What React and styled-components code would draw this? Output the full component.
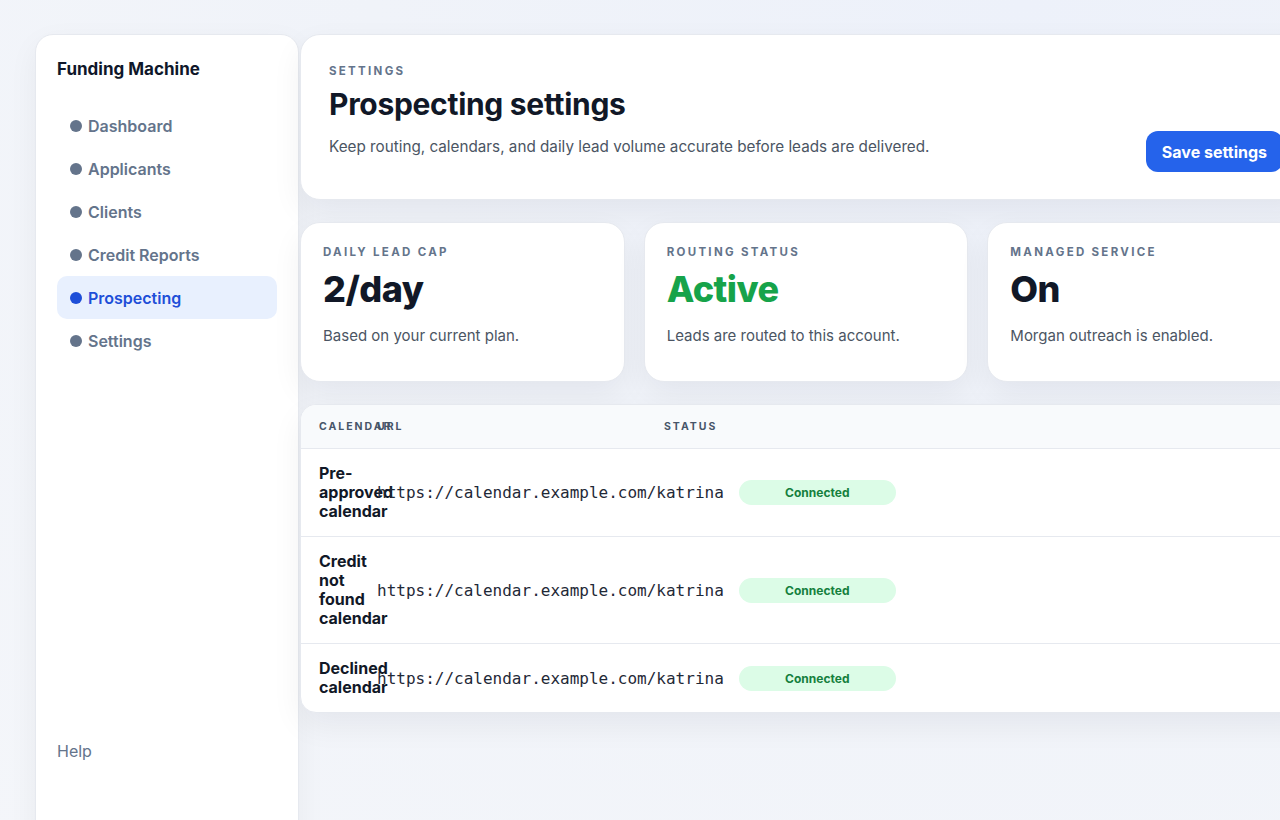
import styled, { createGlobalStyle } from 'styled-components';

const Global = createGlobalStyle`
  * { box-sizing: border-box; }
  html, body { margin: 0; padding: 0; }
  body {
    font-family: Inter, "Noto Sans", sans-serif;
    background: radial-gradient(ellipse at 80% 0%, #edf1fa 0%, #f0f3f9 45%, #f4f6fa 100%);
    min-height: 820px;
    overflow: hidden;
    color: #0f172a;
  }
`;

const nav = ['Dashboard', 'Applicants', 'Clients', 'Credit Reports', 'Prospecting', 'Settings'];

const stats = [
  { label: 'Daily lead cap', value: '2/day', note: 'Based on your current plan.' },
  { label: 'Routing status', value: 'Active', note: 'Leads are routed to this account.', green: true },
  { label: 'Managed service', value: 'On', note: 'Morgan outreach is enabled.' },
];

const calendars = [
  'Pre-approved calendar',
  'Credit not found calendar',
  'Declined calendar',
];

const App = () => {
  return (
    <Shell>
      <Global />
      <Sidebar>
        <Brand>Funding Machine</Brand>
        <NavList>
          {nav.map((item) => (
            <NavItem key={item} $active={item === 'Prospecting'}>
              <Dot />
              {item}
            </NavItem>
          ))}
        </NavList>
        <Help>Help</Help>
      </Sidebar>
      <Main>
        <HeaderCard>
          <div>
            <Eyebrow>Settings</Eyebrow>
            <Title>Prospecting settings</Title>
            <Subtitle>Keep routing, calendars, and daily lead volume accurate before leads are delivered.</Subtitle>
          </div>
          <SaveButton>Save settings</SaveButton>
        </HeaderCard>
        <StatGrid>
          {stats.map((s) => (
            <StatCard key={s.label}>
              <Eyebrow>{s.label}</Eyebrow>
              <StatValue $green={s.green}>{s.value}</StatValue>
              <StatNote>{s.note}</StatNote>
            </StatCard>
          ))}
        </StatGrid>
        <TableCard>
          <HeadRow>
            <HeadCell>Calendar</HeadCell>
            <HeadCell>URL</HeadCell>
            <HeadCell>Status</HeadCell>
          </HeadRow>
          {calendars.map((c) => (
            <Row key={c}>
              <NameCell>{c}</NameCell>
              <UrlCell>https://calendar.example.com/katrina</UrlCell>
              <Pill>Connected</Pill>
            </Row>
          ))}
        </TableCard>
      </Main>
    </Shell>
  );
};

export default App;

const Shell = styled.div`
  display: grid;
  grid-template-columns: 264px 1012px;
  column-gap: 1px;
  padding: 34px 0 0 35px;
  align-items: start;
`;

const Sidebar = styled.aside`
  height: 830px;
  background: #fff;
  border: 1px solid #e6e9ef;
  border-radius: 18px;
  padding: 22px 21px;
  display: flex;
  flex-direction: column;
  box-shadow: 0 10px 30px rgba(15, 23, 42, 0.05);
`;

const Brand = styled.div`
  font-size: 17px;
  font-weight: 700;
  color: #0f172a;
  line-height: 24px;
`;

const NavList = styled.nav`
  margin-top: 23px;
  display: flex;
  flex-direction: column;
`;

const NavItem = styled.div`
  height: 43px;
  display: flex;
  align-items: center;
  gap: 6px;
  padding: 0 13px;
  border-radius: 10px;
  font-size: 16px;
  font-weight: 600;
  color: ${(p) => (p.$active ? '#1d4ed8' : '#64748b')};
  background: ${(p) => (p.$active ? '#e8f0fe' : 'transparent')};
  span { background: ${(p) => (p.$active ? '#1d4ed8' : '#64748b')}; }
`;

const Dot = styled.span`
  width: 12px;
  height: 12px;
  border-radius: 50%;
  flex: none;
`;

const Help = styled.div`
  margin-top: 379px;
  font-size: 16px;
  color: #64748b;
  line-height: 20px;
`;

const Main = styled.main`
  display: flex;
  flex-direction: column;
  gap: 22px;
`;

const Card = styled.section`
  background: #fff;
  border: 1px solid #e6e9ef;
  border-radius: 20px;
  box-shadow: 0 12px 32px rgba(15, 23, 42, 0.06);
`;

const HeaderCard = styled(Card)`
  height: 166px;
  padding: 29px 28px 27px 28px;
  display: flex;
  justify-content: space-between;
  align-items: flex-start;
`;

const Eyebrow = styled.div`
  font-size: 11.5px;
  font-weight: 700;
  letter-spacing: 0.2em;
  text-transform: uppercase;
  color: #64748b;
  line-height: 14px;
`;

const Title = styled.h1`
  margin: 8px 0 0;
  font-size: 30px;
  font-weight: 700;
  color: #111827;
  line-height: 36px;
  letter-spacing: -0.01em;
`;

const Subtitle = styled.p`
  margin: 15px 0 0;
  font-size: 15.25px;
  color: #4b5563;
  line-height: 20px;
`;

const SaveButton = styled.button`
  align-self: flex-end;
  height: 41px;
  padding: 0 16px;
  border: 0;
  border-radius: 12px;
  background: #2563eb;
  color: #fff;
  font-family: inherit;
  font-size: 16px;
  font-weight: 700;
  white-space: nowrap;
`;

const StatGrid = styled.div`
  display: grid;
  grid-template-columns: repeat(3, 1fr);
  gap: 19px;
`;

const StatCard = styled(Card)`
  height: 160px;
  padding: 22px 22px;
`;

const StatValue = styled.div`
  margin-top: 9px;
  font-size: 36px;
  font-weight: 800;
  line-height: 42px;
  letter-spacing: -0.015em;
  color: ${(p) => (p.$green ? '#16a34a' : '#111827')};
`;

const StatNote = styled.div`
  margin-top: 16px;
  font-size: 15px;
  color: #4b5563;
  line-height: 20px;
`;

const TableCard = styled(Card)`
  border-radius: 16px;
  overflow: hidden;
`;

const HeadRow = styled.div`
  display: grid;
  grid-template-columns: 58px 287px 1fr;
  height: 44px;
  align-items: center;
  padding: 0 18px;
  background: #f8fafc;
  border-bottom: 1px solid #e6e9ef;
`;

const HeadCell = styled.div`
  font-size: 10.5px;
  font-weight: 700;
  letter-spacing: 0.19em;
  text-transform: uppercase;
  color: #475569;
  white-space: nowrap;
`;

const Row = styled.div`
  display: flex;
  align-items: center;
  padding: 15px 18px 15px;
  border-bottom: 1px solid #e6e9ef;
  &:last-child { border-bottom: 0; }
`;

const NameCell = styled.div`
  width: 58px;
  flex: none;
  font-size: 16px;
  font-weight: 700;
  line-height: 19px;
  color: #111827;
`;

const UrlCell = styled.div`
  font-family: "DejaVu Sans Mono", "Liberation Mono", monospace;
  font-size: 16px;
  color: #1f2937;
  white-space: nowrap;
`;

const Pill = styled.span`
  margin-left: 15px;
  width: 157px;
  height: 25px;
  display: inline-flex;
  align-items: center;
  justify-content: center;
  border-radius: 999px;
  background: #dcfce7;
  color: #15803d;
  font-size: 12px;
  font-weight: 700;
`;
